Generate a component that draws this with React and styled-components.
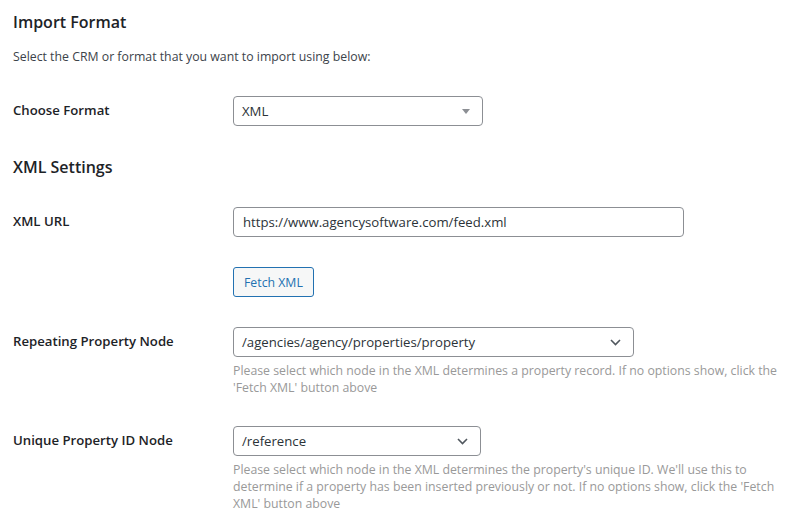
import styled, { createGlobalStyle } from "styled-components";

const GlobalStyle = createGlobalStyle`
  body {
    margin: 0;
    background: #ffffff;
    color: #1d2327;
    font-family: "Open Sans", "Noto Sans", sans-serif;
    font-size: 12.3px;
  }
`;

const Page = styled.div`
  padding: 11px 0 0 13px;
`;

const Heading = styled.h2`
  font-size: 16px;
  font-weight: 600;
  line-height: 22px;
  margin: ${p => (p.first ? "0 0 14px" : "15px 0 14px")};
  color: #1d2327;
`;

const Intro = styled.p`
  margin: 0 0 14px;
  line-height: 20px;
  color: #3c434a;
`;

const Row = styled.div`
  display: flex;
  align-items: flex-start;
`;

const Label = styled.div`
  width: 200px;
  flex-shrink: 0;
  padding: 20px 10px 20px 0;
  font-size: 13.2px;
  font-weight: 600;
  line-height: 19px;
  color: #1d2327;
`;

const Cell = styled.div`
  flex: 1;
  padding: 15px 10px;
  min-width: 0;
`;

const SelectBox = styled.div`
  width: ${p => p.w}px;
  height: 30px;
  box-sizing: border-box;
  border: 1px solid #8c8f94;
  border-radius: 4px;
  display: flex;
  align-items: center;
  justify-content: space-between;
  padding: 0 12px 0 8px;
  font-size: 13.2px;
  color: #2c3338;
  background: #fff;
`;

const TextInput = styled.div`
  width: 451px;
  height: 30px;
  box-sizing: border-box;
  border: 1px solid #8c8f94;
  border-radius: 4px;
  display: flex;
  align-items: center;
  padding: 0 9px;
  font-size: 13.2px;
  color: #2c3338;
`;

const Button = styled.button`
  height: 30px;
  padding: 0 10px;
  border: 1px solid #2271b1;
  border-radius: 3px;
  background: #f6f7f7;
  color: #2271b1;
  font-family: inherit;
  font-size: 12.3px;
  cursor: pointer;
`;

const Description = styled.p`
  margin: 5px 0 0;
  line-height: 17px;
  color: #999999;
  max-width: 550px;
`;

const Triangle = () => (
  <svg width="8" height="5" viewBox="0 0 8 5">
    <path d="M0 0h8L4 5z" fill="#8c8f94" />
  </svg>
);

const Chevron = () => (
  <svg width="11" height="7" viewBox="0 0 11 7">
    <path d="M1 1l4.5 4.5L10 1" fill="none" stroke="#50575e" strokeWidth="1.6" />
  </svg>
);

export default function App() {
  return (
    <Page>
      <GlobalStyle />
      <Heading first>Import Format</Heading>
      <Intro>Select the CRM or format that you want to import using below:</Intro>
      <Row>
        <Label>Choose Format</Label>
        <Cell>
          <SelectBox w={250}>
            XML
            <Triangle />
          </SelectBox>
        </Cell>
      </Row>

      <Heading>XML Settings</Heading>
      <Row>
        <Label>XML URL</Label>
        <Cell>
          <TextInput>https://www.agencysoftware.com/feed.xml</TextInput>
        </Cell>
      </Row>
      <Row>
        <Label />
        <Cell>
          <Button>Fetch XML</Button>
        </Cell>
      </Row>
      <Row>
        <Label>Repeating Property Node</Label>
        <Cell>
          <SelectBox w={401}>
            /agencies/agency/properties/property
            <Chevron />
          </SelectBox>
          <Description>
            Please select which node in the XML determines a property record. If no options show, click the 'Fetch XML' button above
          </Description>
        </Cell>
      </Row>
      <Row>
        <Label>Unique Property ID Node</Label>
        <Cell>
          <SelectBox w={248}>
            /reference
            <Chevron />
          </SelectBox>
          <Description>
            Please select which node in the XML determines the property's unique ID. We'll use this to determine if a property has been inserted previously or not. If no options show, click the 'Fetch XML' button above
          </Description>
        </Cell>
      </Row>
    </Page>
  );
}
